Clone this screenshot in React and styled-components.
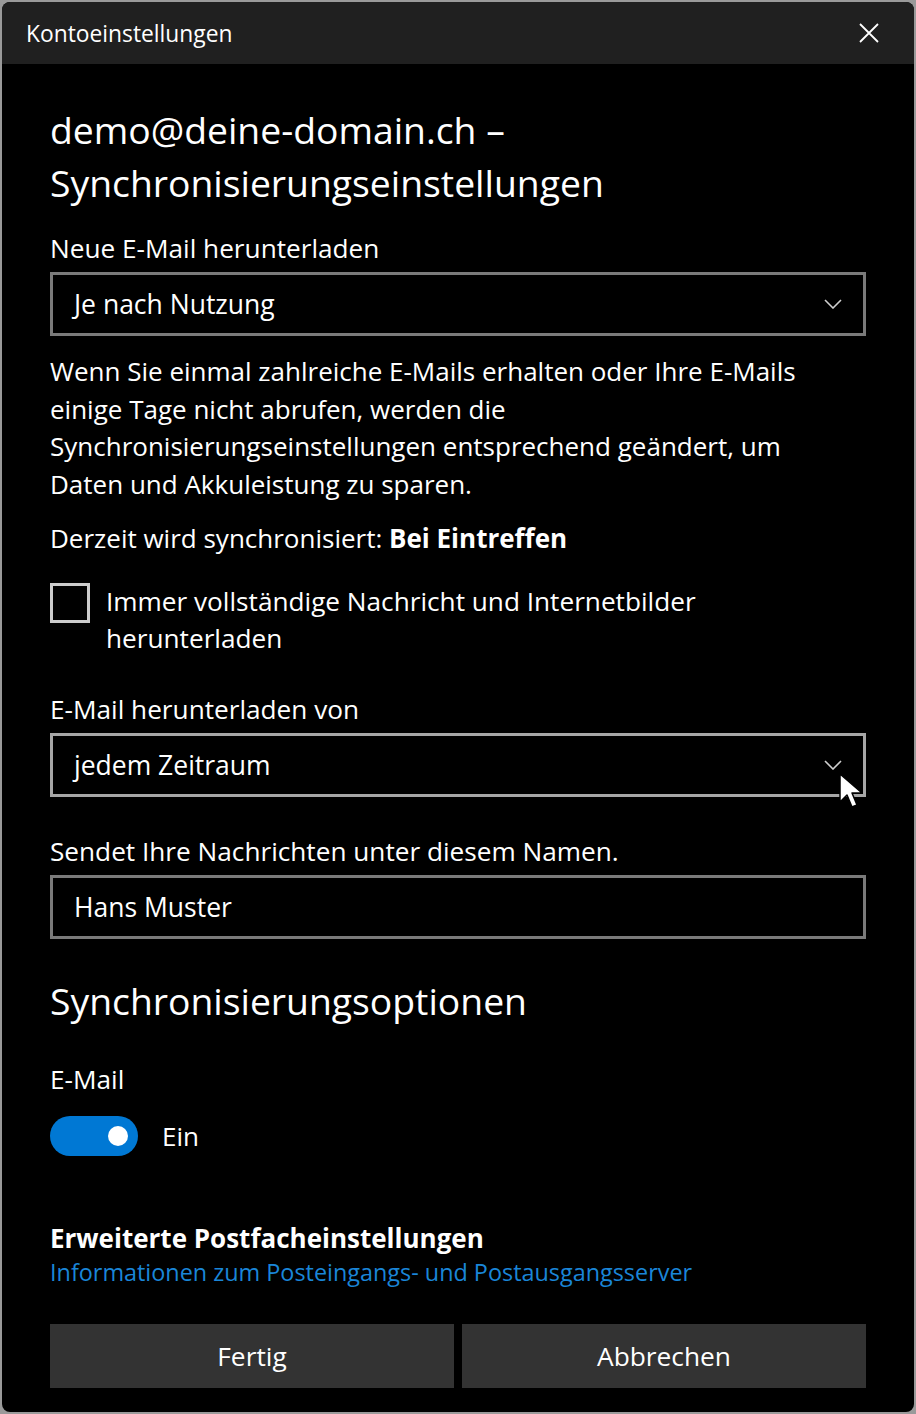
import React from "react";
import styled, { createGlobalStyle } from "styled-components";

const FONT = `"Open Sans", "Noto Sans", "Liberation Sans", sans-serif`;

const Global = createGlobalStyle`
  html, body { margin: 0; padding: 0; }
  body {
    background: #9a9a9a;
    font-family: ${FONT};
    color: #fff;
    -webkit-font-smoothing: antialiased;
  }
  * { box-sizing: border-box; }
`;

const Window = styled.div`
  margin: 2px;
  width: 912px;
  height: 1410px;
  border-radius: 8px;
  overflow: hidden;
  background: #000;
  display: flex;
  flex-direction: column;
`;

const TitleBar = styled.div`
  height: 62px;
  flex: none;
  background: #202020;
  display: flex;
  align-items: center;
  justify-content: space-between;
  padding: 0 35px 0 24px;
  font-size: 22.8px;
`;

const CloseButton = styled.button`
  background: none;
  border: none;
  padding: 0;
  width: 20px;
  height: 20px;
  display: flex;
  align-items: center;
  justify-content: center;
  color: #fff;
`;

const Content = styled.div`
  flex: 1;
  display: flex;
  flex-direction: column;
  padding: 39px 48px 24px;
`;

const Heading = styled.h1`
  margin: 0;
  font-size: 37.3px;
  font-weight: 400;
  line-height: 53px;
`;

const SectionHeading = styled.h2`
  margin: ${(p) => p.$mt || 0}px 0 0;
  font-size: 37.3px;
  font-weight: 400;
  line-height: 50px;
`;

const Label = styled.div`
  margin-top: ${(p) => p.$mt || 0}px;
  font-size: 26.2px;
  line-height: 37px;
`;

const Paragraph = styled.p`
  margin: ${(p) => p.$mt || 0}px 0 0;
  max-width: 790px;
  font-size: 26px;
  line-height: 37.5px;
`;

const Field = styled.div`
  position: relative;
  margin-top: 5px;
  height: 64px;
  border: 3px solid ${(p) => (p.$hover ? "#a6a6a6" : "#7a7a7a")};
  display: flex;
  align-items: center;
  justify-content: space-between;
  padding: 0 21px 0 21px;
  font-size: 26.5px;
`;

const Chevron = styled.svg`
  width: 18px;
  height: 10px;
  flex: none;
`;

const Cursor = styled.svg`
  position: absolute;
  right: -1px;
  top: 36px;
  width: 26px;
  height: 38px;
`;

const CheckRow = styled.label`
  margin-top: 25px;
  display: flex;
  align-items: flex-start;
  gap: 16px;
`;

const CheckBox = styled.span`
  flex: none;
  width: 40px;
  height: 40px;
  border: 3px solid #cccccc;
`;

const CheckText = styled.span`
  font-size: 26.2px;
  line-height: 37.5px;
`;

const ToggleRow = styled.div`
  margin-top: 18px;
  display: flex;
  align-items: center;
  gap: 24px;
  font-size: 26px;
`;

const Toggle = styled.span`
  width: 88px;
  height: 40px;
  border-radius: 20px;
  background: #0078d4;
  display: flex;
  align-items: center;
  justify-content: flex-end;
  padding-right: 10px;
`;

const Knob = styled.span`
  width: 20px;
  height: 20px;
  border-radius: 50%;
  background: #fff;
`;

const BoldTitle = styled.div`
  margin-top: 65px;
  font-size: 26px;
  font-weight: 700;
  line-height: 34px;
`;

const Link = styled.a`
  font-size: 23.4px;
  line-height: 34px;
  color: #1a86d8;
  text-decoration: none;
`;

const Buttons = styled.div`
  margin-top: auto;
  display: grid;
  grid-template-columns: 1fr 1fr;
  gap: 8px;
`;

const Button = styled.button`
  height: 64px;
  border: none;
  background: #333333;
  color: #fff;
  font-family: ${FONT};
  font-size: 26.3px;
`;

const ChevronIcon = () => (
  <Chevron viewBox="0 0 18 10">
    <path d="M1 1 L9 9 L17 1" fill="none" stroke="#cfcfcf" strokeWidth="1.6" />
  </Chevron>
);

export default function App() {
  return (
    <>
      <Global />
      <Window>
        <TitleBar>
          <span>Kontoeinstellungen</span>
          <CloseButton aria-label="Schliessen">
            <svg width="20" height="20" viewBox="0 0 20 20">
              <path d="M1 1 L19 19 M19 1 L1 19" stroke="#fff" strokeWidth="1.8" />
            </svg>
          </CloseButton>
        </TitleBar>
        <Content>
          <Heading>
            demo@deine-domain.ch –<br />
            Synchronisierungseinstellungen
          </Heading>
          <Label $mt={21}>Neue E-Mail herunterladen</Label>
          <Field>
            <span>Je nach Nutzung</span>
            <ChevronIcon />
          </Field>
          <Paragraph $mt={17}>
            Wenn Sie einmal zahlreiche E-Mails erhalten oder Ihre E-Mails einige Tage nicht abrufen, werden die
            Synchronisierungseinstellungen entsprechend geändert, um Daten und Akkuleistung zu sparen.
          </Paragraph>
          <Paragraph $mt={17}>
            Derzeit wird synchronisiert: <b>Bei Eintreffen</b>
          </Paragraph>
          <CheckRow>
            <CheckBox />
            <CheckText>Immer vollständige Nachricht und Internetbilder herunterladen</CheckText>
          </CheckRow>
          <Label $mt={33}>E-Mail herunterladen von</Label>
          <Field $hover>
            <span>jedem Zeitraum</span>
            <ChevronIcon />
            <Cursor viewBox="0 0 26 38">
              <path
                d="M2 2 L2 30 L9 23 L14 35 L19 33 L14 21 L24 21 Z"
                fill="#fff"
                stroke="#000"
                strokeWidth="1.5"
                strokeLinejoin="round"
              />
            </Cursor>
          </Field>
          <Label $mt={36}>Sendet Ihre Nachrichten unter diesem Namen.</Label>
          <Field>
            <span>Hans Muster</span>
          </Field>
          <SectionHeading $mt={37}>Synchronisierungsoptionen</SectionHeading>
          <Label $mt={35}>E-Mail</Label>
          <ToggleRow>
            <Toggle>
              <Knob />
            </Toggle>
            <span>Ein</span>
          </ToggleRow>
          <BoldTitle>Erweiterte Postfacheinstellungen</BoldTitle>
          <Link href="#">Informationen zum Posteingangs- und Postausgangsserver</Link>
          <Buttons>
            <Button>Fertig</Button>
            <Button>Abbrechen</Button>
          </Buttons>
        </Content>
      </Window>
    </>
  );
}
